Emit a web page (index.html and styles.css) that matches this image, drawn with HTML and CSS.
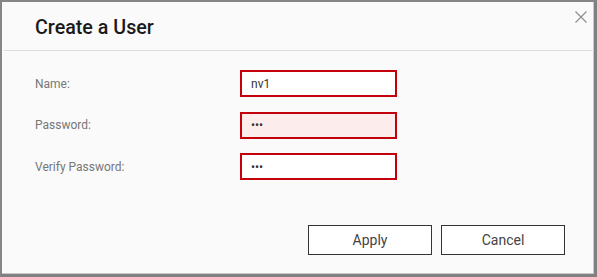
FILE: index.html
```html
<!DOCTYPE html>
<html lang="en">
  <head>
    <meta charset="utf-8" />
    <title>Create a User</title>
    <link rel="stylesheet" href="styles.css">
  </head>
  <body>
    <div class="dialog">
      <header class="dialog__header">
        <h1 class="dialog__title">Create a User</h1>
        <button class="dialog__close" aria-label="Close">
          <svg width="12" height="12" viewBox="0 0 12 12">
            <path d="M0.5 0.5 L11.5 11.5 M11.5 0.5 L0.5 11.5" stroke="#8c8c8c" stroke-width="1.1" fill="none" />
          </svg>
        </button>
      </header>

      <form class="form">
        <label class="form__label" for="name">Name:</label>
        <input class="form__input" id="name" type="text" value="nv1">

        <label class="form__label" for="pass">Password:</label>
        <input class="form__input  form__input--error" id="pass" type="password" value="abc">

        <label class="form__label" for="verify">Verify Password:</label>
        <input class="form__input" id="verify" type="password" value="abc">
      </form>

      <footer class="dialog__footer">
        <button class="btn">Apply</button>
        <button class="btn">Cancel</button>
      </footer>
    </div>
  </body>
</html>
```

FILE: styles.css
```css
body {
  margin: 0;
  background: #fafafa;
  font-family: Roboto, 'Liberation Sans', sans-serif;
}

.dialog {
  position: relative;
  box-sizing: border-box;
  width: 597px;
  height: 277px;
  background: #fafafa;
  border-top: 2px solid #868686;
  border-left: 2px solid #868686;
  border-right: 3px solid #808080;
  border-bottom: 3px solid #808080;
  box-shadow: inset -1px -1px 0 #c9c9c9;
  display: flex;
  flex-direction: column;
}

.dialog__header {
  height: 48px;
  margin-left: 2px;
  border-bottom: 1px solid #dcdcdc;
  display: flex;
  align-items: center;
}

.dialog__title {
  margin: 0;
  padding-left: 31px;
  padding-top: 2px;
  font-size: 19.7px;
  font-weight: 500;
  color: #1a1a1a;
}

.dialog__close {
  position: absolute;
  top: 7px;
  right: 5px;
  width: 16px;
  height: 16px;
  padding: 0;
  border: 0;
  background: none;
  display: flex;
  align-items: center;
  justify-content: center;
}

.form {
  display: grid;
  grid-template-columns: 205px 157px;
  grid-auto-rows: 27px;
  row-gap: 14.5px;
  align-items: center;
  padding: 19px 0 0 33px;
}

.form__label {
  font-size: 12px;
  color: #777;
}

.form__input {
  box-sizing: border-box;
  width: 157px;
  height: 27px;
  margin: 0;
  padding: 0 9px;
  border: 2px solid #c4000a;
  border-radius: 0;
  background: #fff;
  font-family: Roboto, 'Liberation Sans', sans-serif;
  font-size: 12px;
  color: #333;
  outline: none;
}

.form__input--error {
  background: #fdecec;
}

.dialog__footer {
  margin-top: auto;
  display: flex;
  justify-content: flex-end;
  gap: 9px;
  padding: 0 29px 19px 0;
}

.btn {
  box-sizing: border-box;
  width: 124px;
  height: 30px;
  border: 1px solid #333;
  border-radius: 0;
  background: #fff;
  font-family: Roboto, 'Liberation Sans', sans-serif;
  font-size: 14px;
  color: #444;
}
```
